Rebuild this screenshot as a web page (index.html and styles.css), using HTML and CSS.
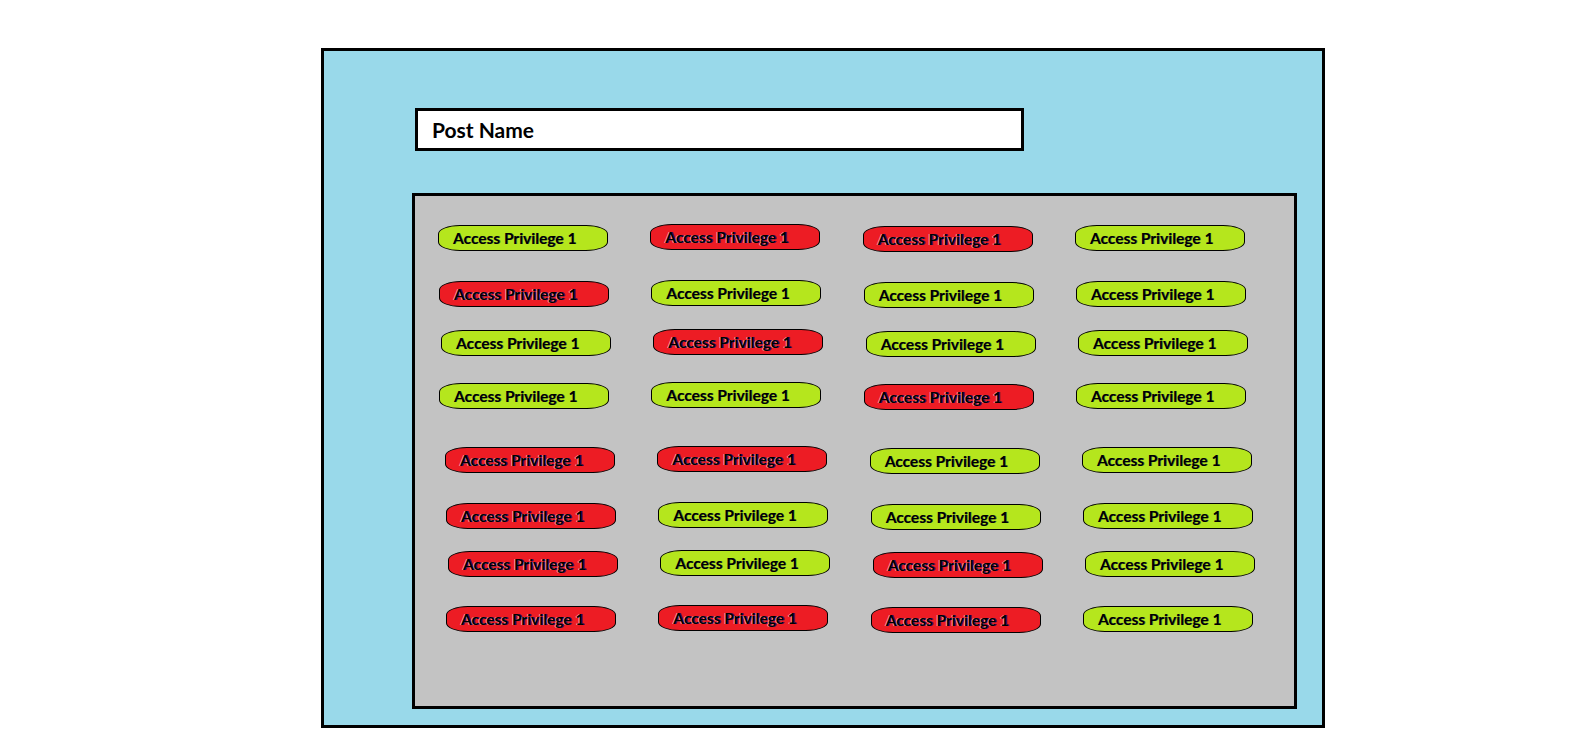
FILE: index.html
```html
<!DOCTYPE html>
<html lang="en">
<head>
<meta charset="utf-8">
<title>Post Access Privileges</title>
<link rel="stylesheet" href="styles.css">
</head>
<body>
<div class="frame">
  <div class="post-name">Post Name</div>
  <div class="privileges">
    <div class="row r1">
      <span class="pill on">Access Privilege 1</span>
      <span class="pill off">Access Privilege 1</span>
      <span class="pill off">Access Privilege 1</span>
      <span class="pill on">Access Privilege 1</span>
    </div>
    <div class="row r2">
      <span class="pill off">Access Privilege 1</span>
      <span class="pill on">Access Privilege 1</span>
      <span class="pill on">Access Privilege 1</span>
      <span class="pill on">Access Privilege 1</span>
    </div>
    <div class="row r3">
      <span class="pill on">Access Privilege 1</span>
      <span class="pill off">Access Privilege 1</span>
      <span class="pill on">Access Privilege 1</span>
      <span class="pill on">Access Privilege 1</span>
    </div>
    <div class="row r4">
      <span class="pill on">Access Privilege 1</span>
      <span class="pill on">Access Privilege 1</span>
      <span class="pill off">Access Privilege 1</span>
      <span class="pill on">Access Privilege 1</span>
    </div>
    <div class="row r5">
      <span class="pill off">Access Privilege 1</span>
      <span class="pill off">Access Privilege 1</span>
      <span class="pill on">Access Privilege 1</span>
      <span class="pill on">Access Privilege 1</span>
    </div>
    <div class="row r6">
      <span class="pill off">Access Privilege 1</span>
      <span class="pill on">Access Privilege 1</span>
      <span class="pill on">Access Privilege 1</span>
      <span class="pill on">Access Privilege 1</span>
    </div>
    <div class="row r7">
      <span class="pill off">Access Privilege 1</span>
      <span class="pill on">Access Privilege 1</span>
      <span class="pill off">Access Privilege 1</span>
      <span class="pill on">Access Privilege 1</span>
    </div>
    <div class="row r8">
      <span class="pill off">Access Privilege 1</span>
      <span class="pill off">Access Privilege 1</span>
      <span class="pill off">Access Privilege 1</span>
      <span class="pill on">Access Privilege 1</span>
    </div>
  </div>
</div>
</body>
</html>
```
FILE: styles.css
```css
* { box-sizing: border-box; }

html, body {
  margin: 0;
  padding: 0;
  background: #ffffff;
}

body {
  font-family: Lato, "Open Sans", "Liberation Sans", sans-serif;
  color: #000;
  padding-top: 48px;
  padding-left: 321px;
}

.frame {
  width: 1004px;
  height: 680px;
  border: 3px solid #000;
  background: #99d9ea;
  padding-top: 57px;
}

.post-name {
  margin-left: 91px;
  width: 609px;
  height: 43px;
  border: 3px solid #000;
  background: #fff;
  display: flex;
  align-items: center;
  padding-left: 14px;
  font-weight: 700;
  font-size: 21px;
}

.privileges {
  margin-top: 42px;
  margin-left: 88px;
  width: 885px;
  height: 516px;
  border: 3px solid #000;
  background: #c3c3c3;
  padding-top: 29px;
  padding-left: 23px;
}

.row {
  display: flex;
  gap: 42.33px;
  height: 26px;
  align-items: flex-start;
}

.r1 { margin-left: 0; }
.r2 { margin-left: 1px; margin-top: 30px; }
.r3 { margin-left: 3px; margin-top: 23px; }
.r4 { margin-left: 1px; margin-top: 27px; }
.r5 { margin-left: 7px; margin-top: 38px; }
.r6 { margin-left: 8px; margin-top: 30px; }
.r7 { margin-left: 10px; margin-top: 22px; }
.r8 { margin-left: 8px; margin-top: 29px; }

.pill {
  flex: none;
  width: 170px;
  height: 26px;
  border: 1px solid #000;
  border-radius: 22px / 9px;
  display: flex;
  align-items: center;
  padding-left: 14px;
  font-weight: 700;
  font-size: 15.5px;
  white-space: nowrap;
}

.pill:nth-child(2) { margin-top: -1px; }
.pill:nth-child(3) { margin-top: 1px; }

.on {
  background: #b5e61d;
  text-shadow: 0.6px 0 0 rgba(0, 0, 120, 0.5);
}

.off {
  background: #ed1c24;
  text-shadow: -1px 0 0 rgba(255, 255, 255, 0.55), 1px 0 0 rgba(0, 0, 160, 0.6);
}
```
